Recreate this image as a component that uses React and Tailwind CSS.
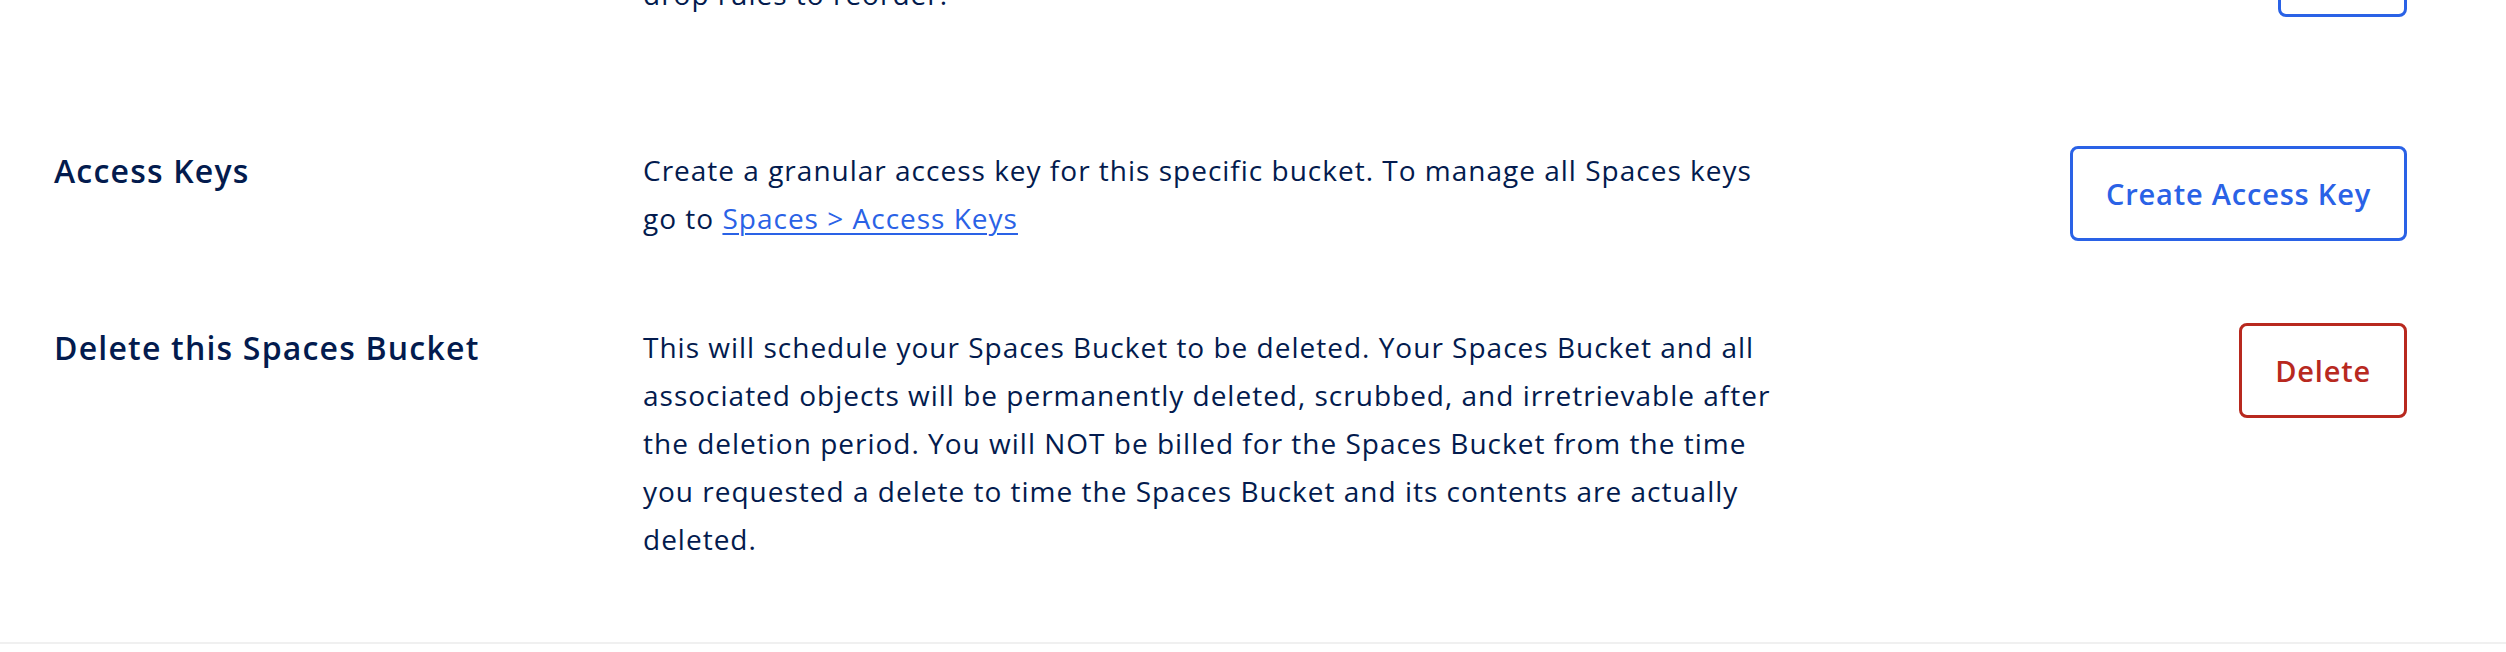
import React from "react";

// one settings row: title | description | action
function SettingRow({ title, children, action }) {
  return (
    <div className="flex items-start">
      <div className="w-[643px] shrink-0 pl-[54px] text-[32px] font-semibold leading-[49px] tracking-[1.2px]">
        {title}
      </div>
      <div className="w-[1150px] shrink-0 text-[28px] leading-[48px] tracking-[1px]">
        {children}
      </div>
      <div className="flex flex-1 justify-end pr-[99px]">{action}</div>
    </div>
  );
}

const OutlineButton = ({ children, tone = "blue" }) => {
  const tones = {
    blue: "border-[#2a62e6] text-[#2a62e6]",
    red: "border-[#b8291f] text-[#b8291f]",
  };
  return (
    <button
      className={`flex h-[95px] items-center rounded-[8px] border-[3px] bg-white px-[33px] text-[29px] font-semibold tracking-[0.8px] ${tones[tone]}`}
    >
      {children}
    </button>
  );
};

export default function App() {
  return (
    <div className="h-[652px] overflow-hidden bg-white font-['Open_Sans','Liberation_Sans',sans-serif] text-[#031b4e]">
      <div className="border-b-2 border-[#f0f0f0] pb-[79px]">
        {/* tail of the previous section, scrolled mostly out of view */}
        <div className="-mt-[78px]">
          <SettingRow title="" action={<OutlineButton>Edit</OutlineButton>}>
            <p className="pt-[48px]">drop rules to reorder.</p>
          </SettingRow>
        </div>

        <div className="mt-[128px] flex flex-col gap-[81px]">
          <SettingRow
            title="Access Keys"
            action={<OutlineButton>Create Access Key</OutlineButton>}
          >
            <p>
              Create a granular access key for this specific bucket. To manage
              all Spaces keys go to{" "}
              <a
                href="#"
                className="text-[#2a62e6] underline decoration-[2px] underline-offset-[4px]"
              >
                Spaces &gt; Access Keys
              </a>
            </p>
          </SettingRow>

          <SettingRow
            title="Delete this Spaces Bucket"
            action={<OutlineButton tone="red">Delete</OutlineButton>}
          >
            <p>
              This will schedule your Spaces Bucket to be deleted. Your Spaces
              Bucket and all associated objects will be permanently deleted,
              scrubbed, and irretrievable after the deletion period. You will
              NOT be billed for the Spaces Bucket from the time you requested a
              delete to time the Spaces Bucket and its contents are actually
              deleted.
            </p>
          </SettingRow>
        </div>
      </div>
    </div>
  );
}
